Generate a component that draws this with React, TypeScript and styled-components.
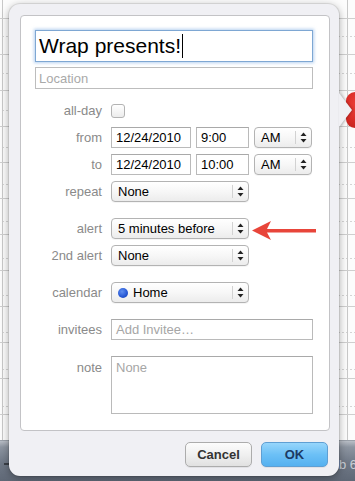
import React from 'react';
import styled, { createGlobalStyle } from 'styled-components';

const Global = createGlobalStyle`
  html, body { margin: 0; padding: 0; }
  body {
    width: 355px;
    height: 481px;
    overflow: hidden;
    font-family: "Liberation Sans", Arial, Helvetica, sans-serif;
  }
  * { box-sizing: border-box; }
`;

const Screen = styled.div`
  position: relative;
  width: 355px;
  height: 481px;
  overflow: hidden;
  display: flex;
  flex-direction: column;
`;

const CalendarGrid = styled.div`
  flex: 1;
  background-color: #fcfcfc;
  background-image:
    repeating-linear-gradient(to bottom, transparent 0 18px, #cfcfcf 18px 19px, transparent 19px 36px),
    linear-gradient(to right, transparent 2px, #c8c8c8 2px 3px, transparent 3px 347px, #c8c8c8 347px 348px, transparent 348px),
    linear-gradient(to right, #fcfcfc 50%, transparent 50%),
    repeating-linear-gradient(to bottom, transparent 0 36px, #d4d4d4 36px 37px, transparent 37px 36px);
  background-size: 100% 100%, 100% 100%, 4px 100%, 100% 100%;
`;

const Dock = styled.div`
  height: 41px;
  display: flex;
  align-items: center;
  justify-content: space-between;
  padding: 6px 0 0 4px;
  background: linear-gradient(to bottom, #b9bec6 0, #8d95a1 6px, #6f7886 22px, #5f6876 100%);
  border-top: 1px solid #9aa0a9;
  color: #2b2f36;
  font-size: 13px;
`;

const DockMark = styled.span`
  width: 6px;
  height: 2px;
  background: #3a3f47;
`;

const DockDate = styled.span`
  margin-right: -2px;
  color: #c9ced6;
  font-size: 13px;
`;

const RedBadge = styled.div`
  position: absolute;
  left: 346px;
  top: 92px;
  width: 36px;
  height: 36px;
  border-radius: 9px;
  background: radial-gradient(circle at 40% 35%, #f0453f 0, #d82a25 55%, #b3201c 100%);
`;

const Popover = styled.div`
  position: absolute;
  left: 9px;
  top: 4px;
  width: 330px;
  height: 472px;
  border-radius: 11px;
  background: #f0f0f4;
  box-shadow: 0 2px 9px rgba(0, 0, 0, 0.35), 0 0 0 1px rgba(0, 0, 0, 0.08);
  display: flex;
  flex-direction: column;
  padding: 11px 9px 9px 11px;

  &::after {
    content: "";
    position: absolute;
    right: -13px;
    top: 89px;
    width: 0;
    height: 0;
    border-left: 13px solid #f0f0f4;
    border-top: 17px solid transparent;
    border-bottom: 17px solid transparent;
    filter: drop-shadow(1px 0 1px rgba(0, 0, 0, 0.25));
  }
`;

const Panel = styled.div`
  height: 416px;
  background: #ffffff;
  border: 1px solid #c3c3c6;
  border-radius: 4px;
  padding: 14px 16px 0 14px;
  display: flex;
  flex-direction: column;
`;

const TitleField = styled.div`
  height: 32px;
  border: 1px solid #7ea7d3;
  box-shadow: 0 0 3px 1px rgba(120, 170, 225, 0.55);
  background: #fff;
  display: flex;
  align-items: center;
  padding-left: 3px;
  font-size: 21px;
  color: #000;
  white-space: nowrap;
`;

const Caret = styled.span`
  display: inline-block;
  width: 1px;
  height: 24px;
  margin-left: 1px;
  background: #000;
`;

const LocationField = styled.div`
  margin-top: 5px;
  height: 22px;
  border: 1px solid #bdbdbd;
  display: flex;
  align-items: center;
  padding-left: 3px;
  font-size: 13px;
  color: #a9a9a9;
`;

const Row = styled.div<{ $top: number; $height?: number }>`
  margin-top: ${(p) => p.$top}px;
  height: ${(p) => p.$height ?? 21}px;
  display: grid;
  grid-template-columns: 67px 1fr;
  column-gap: 9px;
  align-items: center;
`;

const Label = styled.span<{ $alignTop?: boolean }>`
  justify-self: end;
  align-self: ${(p) => (p.$alignTop ? 'start' : 'center')};
  padding-top: ${(p) => (p.$alignTop ? '4px' : '0')};
  font-size: 13px;
  color: #8a8a8a;
  white-space: nowrap;
`;

const Controls = styled.div`
  display: flex;
  gap: 5px;
  height: 100%;
  align-items: center;
`;

const Checkbox = styled.span`
  width: 14px;
  height: 14px;
  border: 1px solid #b3b3b3;
  border-radius: 3px;
  background: linear-gradient(to bottom, #ffffff, #ececec);
`;

const TextBox = styled.div<{ $width: number; $placeholder?: boolean }>`
  width: ${(p) => p.$width}px;
  height: 21px;
  border: 1px solid #bababa;
  border-top-color: #a9a9a9;
  background: #fff;
  display: flex;
  align-items: center;
  padding-left: 4px;
  font-size: 13px;
  color: ${(p) => (p.$placeholder ? '#a6a6a6' : '#000')};
  white-space: nowrap;
`;

const NoteBox = styled.div`
  width: 202px;
  height: 58px;
  border: 1px solid #bababa;
  border-top-color: #a9a9a9;
  background: #fff;
  padding: 3px 0 0 4px;
  font-size: 13px;
  color: #a6a6a6;
`;

const SelectBox = styled.div<{ $width: number }>`
  width: ${(p) => p.$width}px;
  height: 21px;
  border: 1px solid #b3b3b3;
  border-radius: 4px;
  background: linear-gradient(to bottom, #ffffff 0%, #f7f7f7 50%, #ececec 100%);
  box-shadow: 0 1px 0 rgba(0, 0, 0, 0.04);
  display: flex;
  align-items: center;
  font-size: 13px;
  color: #000;
  white-space: nowrap;
`;

const SelectText = styled.span`
  flex: 1;
  display: flex;
  align-items: center;
  gap: 5px;
  padding-left: 6px;
`;

const SelectArrows = styled.span`
  width: 16px;
  height: 13px;
  border-left: 1px solid #d2d2d2;
  display: flex;
  align-items: center;
  justify-content: center;
`;

const Dot = styled.span`
  width: 10px;
  height: 10px;
  border-radius: 50%;
  background: radial-gradient(circle at 40% 35%, #5f8ff0 0, #2556d4 60%, #1a3f9e 100%);
`;

const Footer = styled.div`
  margin-top: 11px;
  display: flex;
  justify-content: flex-end;
  gap: 9px;
  padding-right: 2px;
`;

const Button = styled.button<{ $primary?: boolean }>`
  width: 67px;
  height: 25px;
  border-radius: 5px;
  border: 1px solid ${(p) => (p.$primary ? '#5f9fd3' : '#acacac')};
  background: ${(p) =>
    p.$primary
      ? 'linear-gradient(to bottom, #97d6fb 0%, #6cc0f6 50%, #55b1f0 100%)'
      : 'linear-gradient(to bottom, #fcfcfc 0%, #f0f0f0 50%, #e1e1e1 100%)'};
  font-family: "Liberation Sans", Arial, sans-serif;
  font-weight: bold;
  font-size: 13px;
  color: ${(p) => (p.$primary ? '#1c3a63' : '#333')};
  padding: 0;
  box-shadow: 0 1px 0 rgba(0, 0, 0, 0.06);
`;

const Annotation = styled.svg`
  position: absolute;
  left: 250px;
  top: 219px;
`;

const UpDown = () => (
  <svg width="7" height="11" viewBox="0 0 7 11">
    <path d="M3.5 0.5 L6.5 4 L0.5 4 Z" fill="#222" />
    <path d="M3.5 10.5 L6.5 7 L0.5 7 Z" fill="#222" />
  </svg>
);

const Select = ({ width, children }: { width: number; children: React.ReactNode }) => (
  <SelectBox $width={width}>
    <SelectText>{children}</SelectText>
    <SelectArrows>
      <UpDown />
    </SelectArrows>
  </SelectBox>
);

export default function App() {
  return (
    <Screen>
      <Global />
      <CalendarGrid />
      <Dock>
        <DockMark />
        <DockDate>eb 6</DockDate>
      </Dock>
      <RedBadge />
      <Popover>
        <Panel>
          <TitleField>
            Wrap presents!
            <Caret />
          </TitleField>
          <LocationField>Location</LocationField>

          <Row $top={11}>
            <Label>all-day</Label>
            <Controls>
              <Checkbox />
            </Controls>
          </Row>
          <Row $top={6}>
            <Label>from</Label>
            <Controls>
              <TextBox $width={80}>12/24/2010</TextBox>
              <TextBox $width={53}>9:00</TextBox>
              <Select width={58}>AM</Select>
            </Controls>
          </Row>
          <Row $top={6}>
            <Label>to</Label>
            <Controls>
              <TextBox $width={80}>12/24/2010</TextBox>
              <TextBox $width={53}>10:00</TextBox>
              <Select width={58}>AM</Select>
            </Controls>
          </Row>
          <Row $top={6}>
            <Label>repeat</Label>
            <Controls>
              <Select width={138}>None</Select>
            </Controls>
          </Row>

          <Row $top={16}>
            <Label>alert</Label>
            <Controls>
              <Select width={138}>5 minutes before</Select>
            </Controls>
          </Row>
          <Row $top={6}>
            <Label>2nd alert</Label>
            <Controls>
              <Select width={138}>None</Select>
            </Controls>
          </Row>

          <Row $top={16}>
            <Label>calendar</Label>
            <Controls>
              <Select width={138}>
                <Dot />
                Home
              </Select>
            </Controls>
          </Row>

          <Row $top={16}>
            <Label>invitees</Label>
            <Controls>
              <TextBox $width={202} $placeholder>
                Add Invitee…
              </TextBox>
            </Controls>
          </Row>

          <Row $top={16} $height={58}>
            <Label $alignTop>note</Label>
            <NoteBox>None</NoteBox>
          </Row>
        </Panel>
        <Footer>
          <Button>Cancel</Button>
          <Button $primary>OK</Button>
        </Footer>
      </Popover>
      <Annotation width="68" height="24" viewBox="0 0 68 24">
        <path d="M2 11.5 L21 2 L17 10 L66 10 L66 13.5 L17 13.5 L21 21 Z" fill="#e8453a" />
      </Annotation>
    </Screen>
  );
}
